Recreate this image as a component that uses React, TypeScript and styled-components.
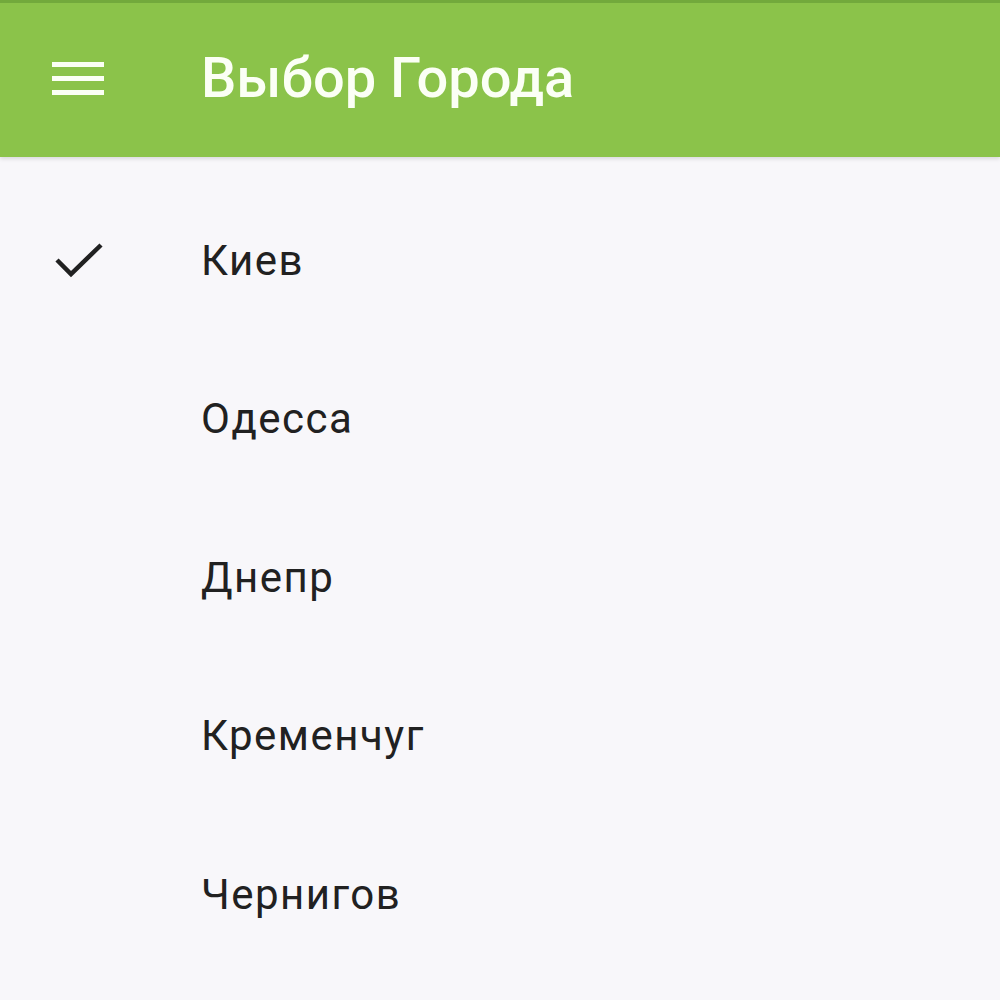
import React, { useState } from "react";
import styled, { createGlobalStyle } from "styled-components";

const cities = ["Киев", "Одесса", "Днепр", "Кременчуг", "Чернигов"];

export default function App() {
    const [selected, setSelected] = useState("Киев");

    return (
        <>
            <GlobalStyle />
            <Screen>
                <Toolbar>
                    <MenuButton aria-label="menu">
                        <svg width="52" height="34" viewBox="0 0 52 34">
                            <rect x="0" y="0" width="52" height="5" fill="#fbfff5" />
                            <rect x="0" y="14" width="52" height="5" fill="#fbfff5" />
                            <rect x="0" y="28" width="52" height="5" fill="#fbfff5" />
                        </svg>
                    </MenuButton>
                    <Title>Выбор Города</Title>
                </Toolbar>
                <List>
                    {cities.map((city) => (
                        <Item key={city} onClick={() => setSelected(city)}>
                            <CheckSlot>
                                {selected === city && (
                                    <svg width="50" height="38" viewBox="0 0 50 38">
                                        <path
                                            d="M3 19 L17 33 L47 4"
                                            fill="none"
                                            stroke="#212121"
                                            strokeWidth="4.5"
                                        />
                                    </svg>
                                )}
                            </CheckSlot>
                            <CityName>{city}</CityName>
                        </Item>
                    ))}
                </List>
            </Screen>
        </>
    );
}

const GlobalStyle = createGlobalStyle`
    html, body {
        margin: 0;
        padding: 0;
        background: #f8f7fa;
    }
    body {
        font-family: Roboto, "Liberation Sans", sans-serif;
    }
`;

const Screen = styled.div`
    width: 1000px;
    height: 1000px;
    overflow: hidden;
    background: #f8f7fa;
`;

const Toolbar = styled.header`
    display: flex;
    align-items: center;
    height: 154px;
    border-top: 3px solid #72a93c;
    background: #8bc34a;
    box-shadow: 0 2px 4px rgba(0, 0, 0, 0.12);
    box-sizing: content-box;
`;

const MenuButton = styled.div`
    display: flex;
    align-items: center;
    width: 52px;
    margin: -2px 97px 0 52px;
`;

const Title = styled.h1`
    margin: -4px 0 0 0;
    font-family: Roboto, "Liberation Sans", sans-serif;
    font-weight: 500;
    font-size: 56px;
    color: #fbfff5;
    letter-spacing: 0;
`;

const List = styled.ul`
    list-style: none;
    margin: 0;
    padding: 24px 0 0 0;
`;

const Item = styled.li`
    display: flex;
    align-items: center;
    height: 158.5px;
    cursor: pointer;
`;

const CheckSlot = styled.div`
    display: flex;
    align-items: center;
    width: 50px;
    margin: 0 97px 0 54px;
`;

const CityName = styled.span`
    font-family: Roboto, "Liberation Sans", sans-serif;
    font-size: 42px;
    letter-spacing: 1.5px;
    color: #212121;
`;
